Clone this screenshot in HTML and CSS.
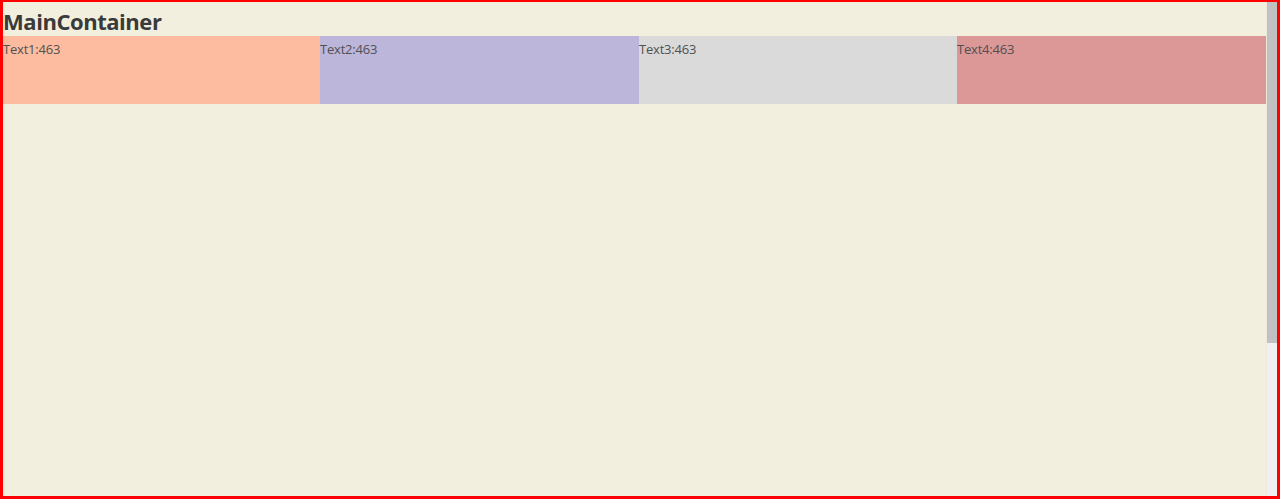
FILE: index.html
```html
<!DOCTYPE html>
<html>
<head>
<meta charset="utf-8">
<link rel="stylesheet" href="styles.css">
</head>
<body>
<div class="frame">
  <div class="main">
    <h1 class="title">MainContainer</h1>
    <div class="row">
      <div class="cell c1">Text1:463</div>
      <div class="cell c2">Text2:463</div>
      <div class="cell c3">Text3:463</div>
      <div class="cell c4">Text4:463</div>
    </div>
  </div>
  <div class="scrollbar">
    <div class="thumb"></div>
    <div class="track"></div>
  </div>
</div>
</body>
</html>
```
FILE: styles.css
```css
html, body {
  margin: 0;
  padding: 0;
  background: #ffffff;
}
.frame {
  box-sizing: border-box;
  width: 1280px;
  height: 499px;
  border: 3px solid #ff0000;
  border-top-width: 2px;
  display: flex;
  background: #f2efdf;
}
.main {
  flex: 1;
  padding-top: 1px;
  font-family: "Open Sans", "Noto Sans", sans-serif;
  color: #3a3a3a;
}
.title {
  margin: 0;
  height: 33px;
  font-size: 22px;
  font-weight: 700;
  line-height: 36px;
  letter-spacing: -0.45px;
}
.row {
  display: flex;
  height: 68px;
}
.cell {
  font-size: 13px;
  line-height: 26px;
  color: #505050;
  letter-spacing: -0.2px;
}
.c1 { width: 317px; background: #fdbc9f; }
.c2 { width: 319px; background: #bdb6db; }
.c3 { width: 318px; background: #dadada; }
.c4 { width: 309px; background: #dc9797; }
.scrollbar {
  width: 10px;
  display: flex;
  flex-direction: column;
  border-left: 1px solid #ebe8dc;
}
.thumb {
  height: 341px;
  background: #c1c1c1;
}
.track {
  flex: 1;
  background: #f0f0f0;
}
```
